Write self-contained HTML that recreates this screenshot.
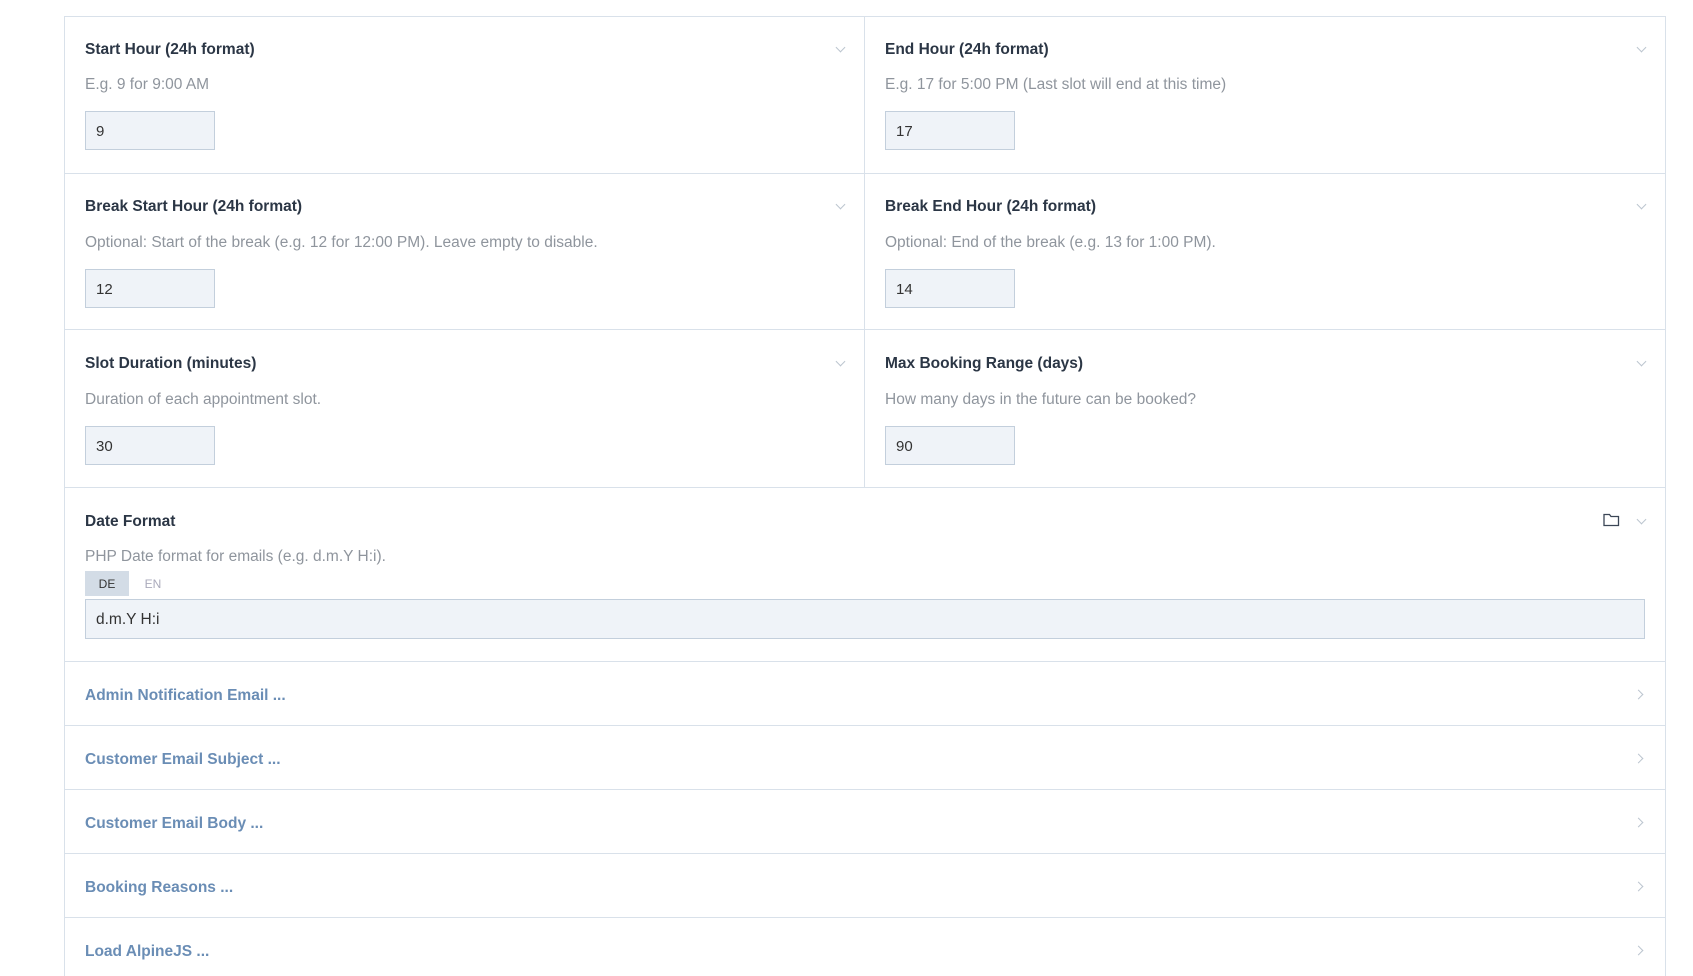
<!DOCTYPE html>
<html><head><style>
*{box-sizing:border-box;margin:0;padding:0}
html,body{width:1693px;height:976px;overflow:hidden}
body{background:#fff;font-family:"Liberation Sans",sans-serif;position:relative}
.box{position:absolute;left:64px;top:16px;width:1602px;height:960px;border:1px solid #d9e1ea;border-bottom:none}
.h{position:absolute;height:1px;background:#d9e1ea;left:64px;width:1602px}
.v{position:absolute;width:1px;background:#d9e1ea;left:864px;top:16px;height:471px}
.t{position:absolute;font-size:15.5px;font-weight:bold;color:#2b3645}
.d{position:absolute;font-size:15.5px;color:#8f959d}
.in{position:absolute;width:130px;height:39px;background:#eff3f8;border:1px solid #c3cfdc;font-size:15px;color:#333;padding:11px 0 0 10px}
.c{position:absolute;width:7px;height:7px;border-right:1.2px solid #bcc5cf;border-bottom:1.2px solid #bcc5cf}
.dn{transform:rotate(45deg)}
.rt{transform:rotate(-45deg)}
.l{position:absolute;left:85px;font-size:15.5px;font-weight:bold;color:#6a8db5}
</style></head><body>
<div class="box"></div>
<div class="v"></div>
<div class="h" style="top:173px"></div>
<div class="h" style="top:329px"></div>
<div class="h" style="top:487px"></div>
<div class="h" style="top:661px"></div>
<div class="h" style="top:725px"></div>
<div class="h" style="top:789px"></div>
<div class="h" style="top:853px"></div>
<div class="h" style="top:917px"></div>

<div class="t" style="left:85px;top:41px">Start Hour (24h format)</div>
<div class="d" style="left:85px;top:76px">E.g. 9 for 9:00 AM</div>
<div class="in" style="left:85px;top:111px">9</div>
<div class="c dn" style="left:837px;top:44px"></div>
<div class="t" style="left:885px;top:41px">End Hour (24h format)</div>
<div class="d" style="left:885px;top:76px">E.g. 17 for 5:00 PM (Last slot will end at this time)</div>
<div class="in" style="left:885px;top:111px">17</div>
<div class="c dn" style="left:1638px;top:44px"></div>

<div class="t" style="left:85px;top:198px">Break Start Hour (24h format)</div>
<div class="d" style="left:85px;top:234px">Optional: Start of the break (e.g. 12 for 12:00 PM). Leave empty to disable.</div>
<div class="in" style="left:85px;top:269px">12</div>
<div class="c dn" style="left:837px;top:201px"></div>
<div class="t" style="left:885px;top:198px">Break End Hour (24h format)</div>
<div class="d" style="left:885px;top:234px">Optional: End of the break (e.g. 13 for 1:00 PM).</div>
<div class="in" style="left:885px;top:269px">14</div>
<div class="c dn" style="left:1638px;top:201px"></div>

<div class="t" style="left:85px;top:355px">Slot Duration (minutes)</div>
<div class="d" style="left:85px;top:391px">Duration of each appointment slot.</div>
<div class="in" style="left:85px;top:426px">30</div>
<div class="c dn" style="left:837px;top:358px"></div>
<div class="t" style="left:885px;top:355px">Max Booking Range (days)</div>
<div class="d" style="left:885px;top:391px">How many days in the future can be booked?</div>
<div class="in" style="left:885px;top:426px">90</div>
<div class="c dn" style="left:1638px;top:358px"></div>

<div class="t" style="left:85px;top:513px">Date Format</div>
<div class="d" style="left:85px;top:548px">PHP Date format for emails (e.g. d.m.Y H:i).</div>
<svg style="position:absolute;left:1603px;top:512px" width="17" height="15" viewBox="0 0 17 15"><path d="M1 2.5V13.5H15.5V4.5H8L6.5 2.5Z" fill="none" stroke="#3b4656" stroke-width="1.3"/></svg>
<div class="c dn" style="left:1638px;top:516px"></div>
<div style="position:absolute;left:85px;top:571px;width:44px;height:25px;background:#d3dce6;font-size:12px;color:#333;text-align:center;line-height:26px">DE</div>
<div style="position:absolute;left:138px;top:571px;width:30px;height:25px;font-size:12px;color:#aab;line-height:26px;text-align:center">EN</div>
<div class="in" style="left:85px;top:599px;width:1560px;height:40px;font-size:15.5px">d.m.Y H:i</div>

<div class="l" style="top:687px">Admin Notification Email ...</div>
<div class="c rt" style="left:1635px;top:691px"></div>
<div class="l" style="top:751px">Customer Email Subject ...</div>
<div class="c rt" style="left:1635px;top:755px"></div>
<div class="l" style="top:815px">Customer Email Body ...</div>
<div class="c rt" style="left:1635px;top:819px"></div>
<div class="l" style="top:879px">Booking Reasons ...</div>
<div class="c rt" style="left:1635px;top:883px"></div>
<div class="l" style="top:943px">Load AlpineJS ...</div>
<div class="c rt" style="left:1635px;top:947px"></div>
</body></html>
